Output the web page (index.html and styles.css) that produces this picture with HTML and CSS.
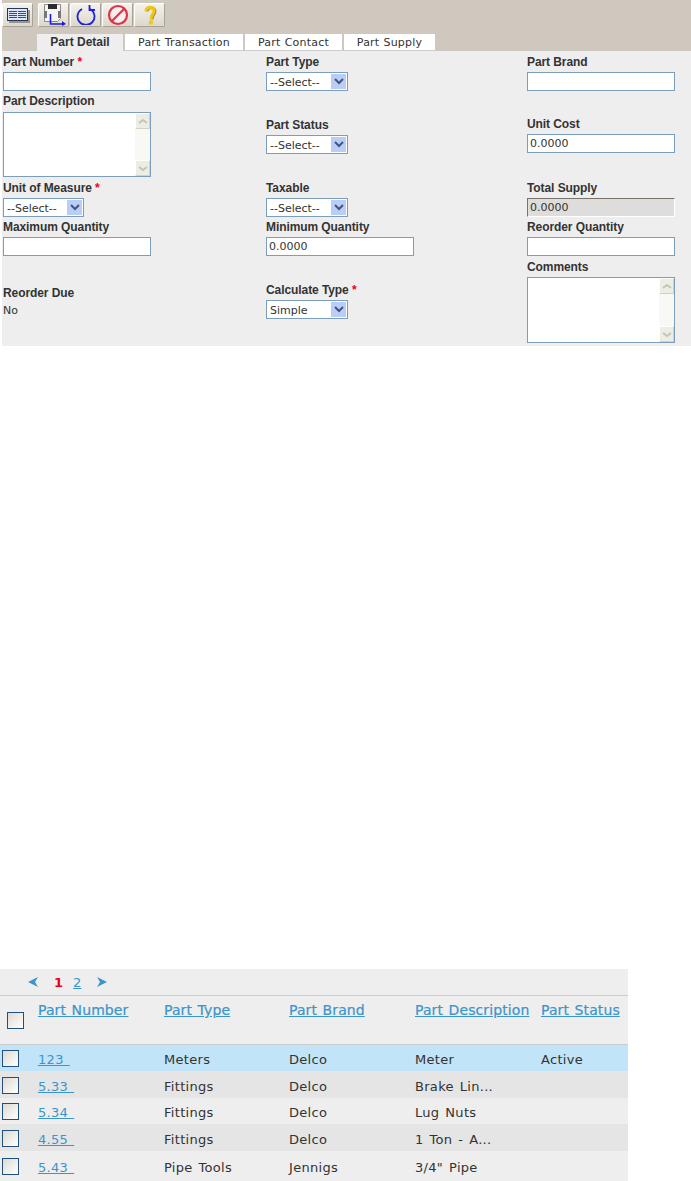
FILE: index.html
```html
<html>
  <head>
    <link rel="stylesheet" href="styles.css">
  </head>
  <body>
    <div class="panel">
      <div class="toolbar">
        <button class="tool first">
          <svg width="24" height="16" viewBox="0 0 24 16">
            <path d="M3 3h22v13H3z" fill="#9a958a"/>
            <rect x="1.5" y="1.5" width="20" height="12" fill="#dbe6f6" stroke="#26365c"/>
            <path d="M3 4.5h17M3 6.5h17M3 8.5h17M3 10.5h17" stroke="#3a4c78"/>
            <path d="M11.5 4v8" stroke="#dbe6f6"/>
          </svg>
        </button>
        <button class="tool">
          <svg width="24" height="22" viewBox="0 0 24 22">
            <path d="M2.5 .5h16v14l-3 3h-13z" fill="#f4f4f4" stroke="#8a8a8a"/>
            <path d="M6 0h9v5H6z" fill="#2c2c2c"/>
            <path d="M2 7h3v7H2zM16 7h3v7h-3z" fill="#777"/>
            <path d="M8.5 10v10h12" fill="none" stroke="#1a1ae0" stroke-width="1.6"/>
            <path d="M20 17l4 3-4 2z" fill="#1a1ae0"/>
          </svg>
        </button>
        <button class="tool">
          <svg width="22" height="20" viewBox="0 0 22 20">
            <path d="M7 4a8.5 8.5 0 1 0 8 0" fill="none" stroke="#2020e0" stroke-width="1.8"/>
            <path d="M14.5 0v5h5.5" fill="none" stroke="#2020e0" stroke-width="1.8"/>
          </svg>
        </button>
        <button class="tool">
          <svg width="22" height="22" viewBox="0 0 22 22">
            <circle cx="11" cy="11" r="9" fill="#f6eeea" stroke="#e0304c" stroke-width="2.2"/>
            <path d="M5 17L17 5" stroke="#e0304c" stroke-width="2.2"/>
          </svg>
        </button>
        <button class="tool">
          <svg width="14" height="20" viewBox="0 0 14 20">
            <path d="M3 6c0-5 8-5 8 0 0 3-3 3-3 8" fill="none" stroke="#a89040" stroke-width="3" transform="translate(1 .5)"/>
            <path d="M3 6c0-5 8-5 8 0 0 3-3 3-3 8" fill="none" stroke="#f0c814" stroke-width="3"/>
            <rect x="6" y="15.5" width="4" height="4" fill="#f0c814"/>
          </svg>
        </button>
      </div>
      <div class="tabs">
        <a class="tab active">Part Detail</a>
        <a class="tab">Part Transaction</a>
        <a class="tab">Part Contact</a>
        <a class="tab">Part Supply</a>
      </div>
    </div>

    <div class="detail">
      <div class="field">
        <label>Part Number <span class="req">*</span></label>
        <input class="text" type="text">
      </div>
      <div class="field">
        <label>Part Type</label>
        <div class="pick"><select><option>--Select--</option></select><span class="drop"><svg width="10" height="7" viewBox="0 0 10 7"><path d="M1 1l4 4 4-4" fill="none" stroke="#3f5680" stroke-width="2"/></svg></span></div>
      </div>
      <div class="field">
        <label>Part Brand</label>
        <input class="text" type="text">
      </div>

      <div class="field">
        <label class="wide">Part Description</label>
        <div class="memo short">
          <textarea></textarea>
          <div class="scroll">
            <span class="step"><svg width="10" height="7" viewBox="0 0 10 7"><path d="M1 5l4-3 4 3" fill="none" stroke="#c8c4b4" stroke-width="2"/></svg></span>
            <span class="step"><svg width="10" height="7" viewBox="0 0 10 7"><path d="M1 2l4 3 4-3" fill="none" stroke="#c8c4b4" stroke-width="2"/></svg></span>
          </div>
        </div>
      </div>
      <div class="field middle status">
        <label>Part Status</label>
        <div class="pick"><select><option>--Select--</option></select><span class="drop"><svg width="10" height="7" viewBox="0 0 10 7"><path d="M1 1l4 4 4-4" fill="none" stroke="#3f5680" stroke-width="2"/></svg></span></div>
      </div>
      <div class="field middle">
        <label>Unit Cost</label>
        <input class="text" type="text" value="0.0000">
      </div>

      <div class="field">
        <label>Unit of Measure <span class="req">*</span></label>
        <div class="pick narrow"><select><option>--Select--</option></select><span class="drop"><svg width="10" height="7" viewBox="0 0 10 7"><path d="M1 1l4 4 4-4" fill="none" stroke="#3f5680" stroke-width="2"/></svg></span></div>
      </div>
      <div class="field">
        <label>Taxable</label>
        <div class="pick"><select><option>--Select--</option></select><span class="drop"><svg width="10" height="7" viewBox="0 0 10 7"><path d="M1 1l4 4 4-4" fill="none" stroke="#3f5680" stroke-width="2"/></svg></span></div>
      </div>
      <div class="field">
        <label>Total Supply</label>
        <input class="text locked" type="text" value="0.0000" disabled>
      </div>

      <div class="field">
        <label>Maximum Quantity</label>
        <input class="text" type="text">
      </div>
      <div class="field">
        <label>Minimum Quantity</label>
        <input class="text" type="text" value="0.0000">
      </div>
      <div class="field">
        <label>Reorder Quantity</label>
        <input class="text" type="text">
      </div>

      <div class="field middle due">
        <label>Reorder Due</label>
        <span class="plain">No</span>
      </div>
      <div class="field middle">
        <label>Calculate Type <span class="req">*</span></label>
        <div class="pick"><select><option>Simple</option></select><span class="drop"><svg width="10" height="7" viewBox="0 0 10 7"><path d="M1 1l4 4 4-4" fill="none" stroke="#3f5680" stroke-width="2"/></svg></span></div>
      </div>
      <div class="field last">
        <label>Comments</label>
        <div class="memo">
          <textarea></textarea>
          <div class="scroll">
            <span class="step"><svg width="10" height="7" viewBox="0 0 10 7"><path d="M1 5l4-3 4 3" fill="none" stroke="#c8c4b4" stroke-width="2"/></svg></span>
            <span class="step"><svg width="10" height="7" viewBox="0 0 10 7"><path d="M1 2l4 3 4-3" fill="none" stroke="#c8c4b4" stroke-width="2"/></svg></span>
          </div>
        </div>
      </div>
    </div>

    <div class="results">
      <div class="pager">
        <svg width="12" height="12" viewBox="0 0 12 12"><path d="M1 6l10-5-3 5 3 5z" fill="#3c94cc"/></svg>
        <span class="current">1</span>
        <a class="page">2</a>
        <svg width="12" height="12" viewBox="0 0 12 12"><path d="M11 6L1 1l3 5-3 5z" fill="#3c94cc"/></svg>
      </div>
      <table>
        <thead>
          <tr>
            <th class="check head-check"><span class="box"></span></th>
            <th class="c1"><a>Part Number</a></th>
            <th class="c2"><a>Part Type</a></th>
            <th class="c3"><a>Part Brand</a></th>
            <th class="c4"><a>Part Description</a></th>
            <th class="c5"><a>Part Status</a></th>
          </tr>
        </thead>
        <tbody>
          <tr class="picked">
            <td class="check"><span class="box"></span></td>
            <td><a>123&nbsp;</a></td><td>Meters</td><td>Delco</td><td>Meter</td><td>Active</td>
          </tr>
          <tr class="odd">
            <td class="check"><span class="box"></span></td>
            <td><a>5.33&nbsp;</a></td><td>Fittings</td><td>Delco</td><td>Brake Lin...</td><td></td>
          </tr>
          <tr>
            <td class="check"><span class="box"></span></td>
            <td><a>5.34&nbsp;</a></td><td>Fittings</td><td>Delco</td><td>Lug Nuts</td><td></td>
          </tr>
          <tr class="odd">
            <td class="check"><span class="box"></span></td>
            <td><a>4.55&nbsp;</a></td><td>Fittings</td><td>Delco</td><td>1 Ton - A...</td><td></td>
          </tr>
          <tr>
            <td class="check"><span class="box"></span></td>
            <td><a>5.43&nbsp;</a></td><td>Pipe Tools</td><td>Jennigs</td><td>3/4" Pipe</td><td></td>
          </tr>
        </tbody>
      </table>
    </div>
  </body>
</html>
```

FILE: styles.css
```css
* {
  box-sizing: border-box;
}

body {
  margin: 0;
  background: #fff;
  font-family: "Liberation Sans", Arial, sans-serif;
  color: #333;
}

.panel {
  margin-left: 2px;
  height: 51px;
  background: #cfc8bf;
  display: flex;
  flex-direction: column;
}

.toolbar {
  display: flex;
  gap: 1px;
  padding-top: 3px;
  height: 34px;
}

.tool {
  width: 31px;
  height: 24px;
  padding: 0;
  border: 1px solid #fff;
  border-right-color: #a8a296;
  border-bottom-color: #a8a296;
  border-radius: 2px;
  background: linear-gradient(#f4f2ec, #ddd8cc);
  display: flex;
  align-items: center;
  justify-content: center;
}

.first {
  margin-right: 4px;
}

.tabs {
  display: flex;
  padding-left: 35px;
  gap: 2px;
  align-items: flex-end;
  height: 17px;
}

.tab {
  height: 17px;
  background: #fff;
  border-bottom: 1px solid #ccc;
  font-family: "DejaVu Sans", Verdana, sans-serif;
  font-size: 11px;
  line-height: 17px;
  letter-spacing: .2px;
  word-spacing: .5px;
  text-align: center;
  color: #333;
}

.tab:nth-child(1) {
  width: 86px;
  background: #eee;
  border-bottom: none;
  font-family: "Liberation Sans", Arial, sans-serif;
  font-weight: bold;
  font-size: 12px;
  letter-spacing: 0;
  word-spacing: 0;
}
.tab:nth-child(2) { width: 118px; }
.tab:nth-child(3) { width: 97px; }
.tab:nth-child(4) { width: 91px; }

.detail {
  margin-left: 2px;
  height: 295px;
  background: #eee;
  display: grid;
  grid-template-columns: 263px 261px 1fr;
  grid-template-rows: 42px 86px 40px 39px 88px;
  padding-left: 1px;
}

.field {
  display: flex;
  flex-direction: column;
  align-self: end;
  padding-bottom: 2px;
}

.middle {
  align-self: center;
}

.status {
  padding-top: 2px;
}

.last {
  padding-bottom: 3px;
}

.field label {
  font-size: 12px;
  font-weight: bold;
  letter-spacing: -.08px;
  line-height: 14px;
  margin-bottom: 3px;
  color: #333;
}

.field .wide {
  margin-bottom: 4px;
}

.due label {
  margin-bottom: 0;
}

.due {
  padding-top: 2px;
}

.req {
  color: #f00020;
}

.text {
  width: 148px;
  height: 19px;
  padding: 1px 2px;
  border: 1px solid #7b9ebd;
  background: #fff;
  font-family: "DejaVu Sans", Verdana, sans-serif;
  font-size: 11px;
  color: #333;
}

.locked {
  border: 1px solid #fff;
  border-top-color: #77736a;
  border-left-color: #77736a;
  background: #dedddb;
}

.pick {
  width: 82px;
  height: 19px;
  padding: 1px;
  border: 1px solid #7b9ebd;
  background: #fff;
  display: flex;
  align-items: center;
}

.narrow {
  width: 81px;
}

.pick select {
  appearance: none;
  flex: 1;
  min-width: 0;
  height: 100%;
  padding: 1px 2px 0;
  border: none;
  background: #fff;
  font-family: "DejaVu Sans", Verdana, sans-serif;
  font-size: 11px;
  color: #333;
}

.drop {
  width: 15px;
  height: 15px;
  background: #b9cdf6;
  display: flex;
  align-items: center;
  justify-content: center;
}

.memo {
  width: 148px;
  height: 66px;
  border: 1px solid #7b9ebd;
  background: #fff;
  display: flex;
}

.short {
  height: 65px;
}

.memo textarea {
  flex: 1;
  min-width: 0;
  border: none;
  outline: none;
  resize: none;
}

.scroll {
  width: 15px;
  background: #f8f8f4;
  display: flex;
  flex-direction: column;
  justify-content: space-between;
}

.step {
  height: 16px;
  background: #eeede5;
  border: 1px solid #fff;
  border-right-color: #d6d2c2;
  border-bottom-color: #d6d2c2;
  display: flex;
  align-items: center;
  justify-content: center;
}

.plain {
  font-family: "DejaVu Sans", Verdana, sans-serif;
  font-size: 11px;
  line-height: 15px;
  margin-top: 3px;
}

.results {
  margin-top: 623px;
  width: 628px;
  background: #eee;
}

.pager {
  height: 26px;
  padding-left: 27px;
  display: flex;
  align-items: center;
  font-family: "DejaVu Sans", Verdana, sans-serif;
  font-size: 13px;
}

.current {
  margin-left: 15px;
  color: #f00010;
  font-weight: bold;
}

.page {
  margin-left: 10px;
  margin-right: 15px;
  color: #3c94cc;
  text-decoration: underline;
}

table {
  width: 628px;
  table-layout: fixed;
  border-collapse: collapse;
  font-family: "DejaVu Sans", Verdana, sans-serif;
  font-size: 13px;
  letter-spacing: .3px;
  word-spacing: 1.5px;
}

th {
  height: 49px;
  padding: 4px 0 0 0;
  vertical-align: top;
  text-align: left;
  font-weight: normal;
  font-size: 14px;
  line-height: 20px;
  letter-spacing: .1px;
  word-spacing: 1px;
  white-space: nowrap;
  border-top: 1px solid #ccc;
  border-bottom: 1px solid #ccc;
}

th a {
  -webkit-text-stroke: .2px #3c94cc;
}

th a, td a {
  color: #3c94cc;
  text-decoration: underline;
}

td {
  height: 26px;
  padding: 4px 0 0 0;
  white-space: nowrap;
  color: #333;
}

.odd td {
  height: 27px;
}

tbody tr:last-child td {
  height: 30px;
}

td.check { width: 38px; padding: 2px 0 0 2px; }
th.head-check { padding: 16px 0 0 7px; }
.check { width: 38px; }
.c1, .c3, .c4 { width: 126px; }
.c2 { width: 125px; }

.box {
  display: block;
  width: 17px;
  height: 17px;
  border: 1px solid #1f5080;
  background: linear-gradient(135deg, #dedad0, #fff);
}

.picked { background: #c2e4f8; }
.odd { background: #e5e5e5; }
```
